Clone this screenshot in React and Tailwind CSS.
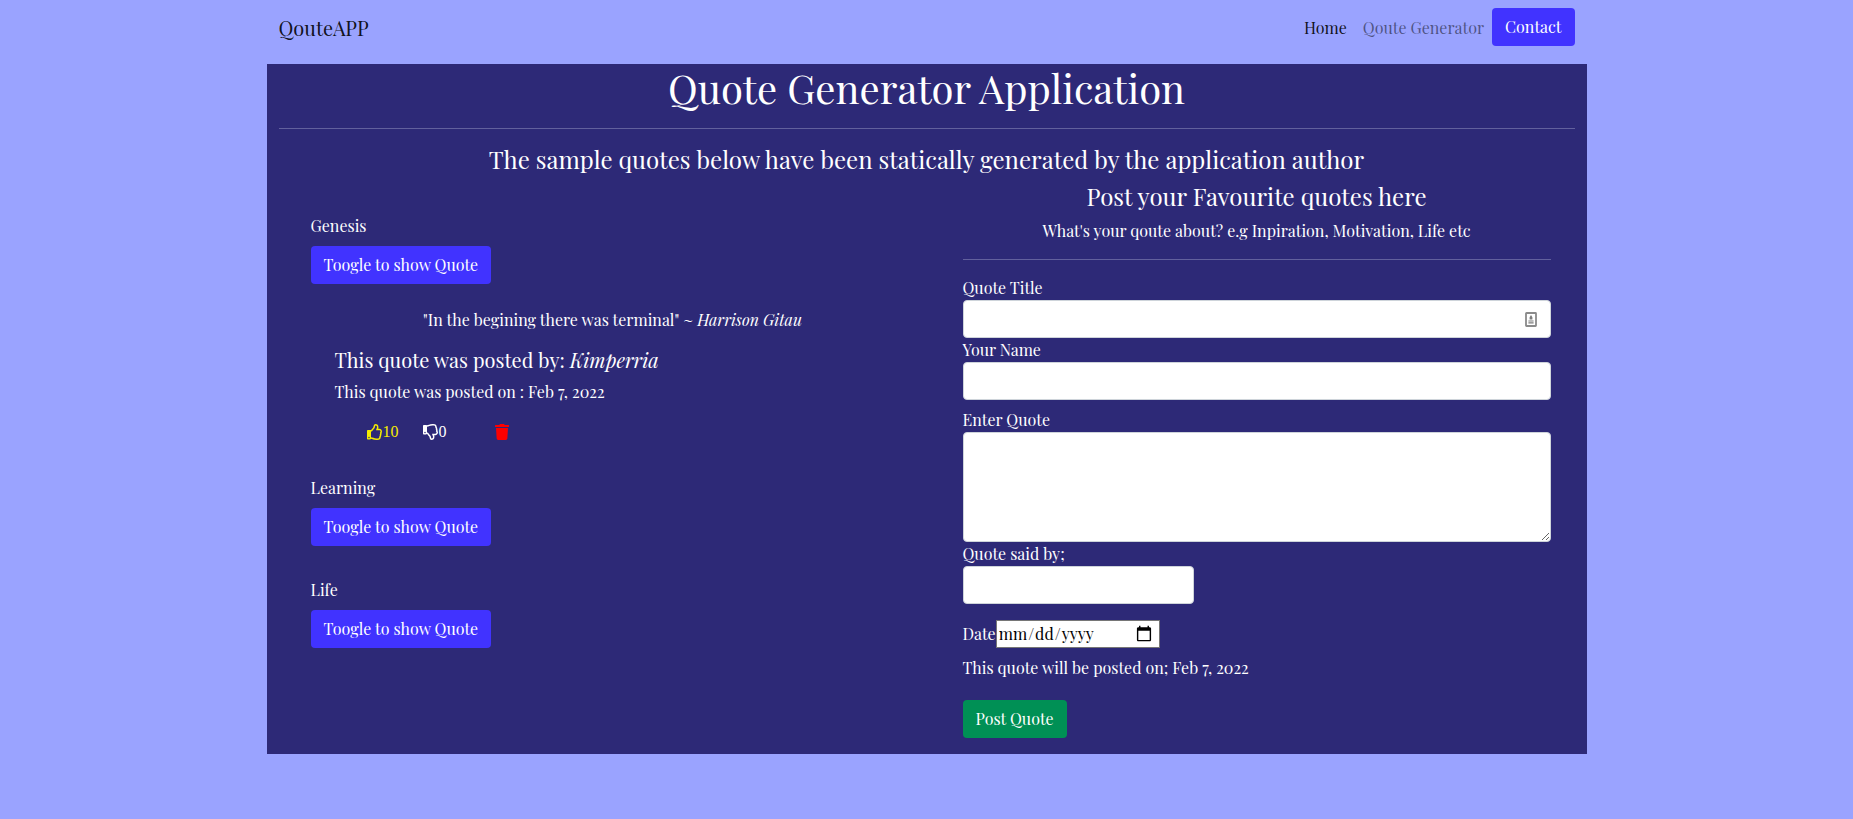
import { useState } from "react";
import { FaRegThumbsUp, FaRegThumbsDown, FaTrash } from "react-icons/fa";

const quotes = [
  {
    title: "Genesis",
    text: "In the begining there was terminal",
    author: "Harrison Gitau",
    poster: "Kimperria",
    date: "Feb 7, 2022",
    likes: 10,
    dislikes: 0,
  },
  { title: "Learning", text: "Never stop learning", author: "Unknown", poster: "Kimperria", date: "Feb 7, 2022", likes: 0, dislikes: 0 },
  { title: "Life", text: "Life is what you make it", author: "Unknown", poster: "Kimperria", date: "Feb 7, 2022", likes: 0, dislikes: 0 },
];

const fieldClass = "block h-[38px] rounded border border-[#ced4da] bg-white px-3 text-[#212529]";

function Quote({ quote, initiallyOpen }) {
  const [open, setOpen] = useState(initiallyOpen);
  return (
    <section>
      <h2 className="mb-2">{quote.title}</h2>
      <button
        type="button"
        onClick={() => setOpen(!open)}
        aria-expanded={open}
        className="h-[38px] rounded bg-[#4133ff] px-[13px] text-white"
      >
        Toogle to show Quote
      </button>
      {open && (
        <div className="px-6 pt-6">
          <p className="mb-4 text-center">
            "{quote.text}" ~ <em>{quote.author}</em>
          </p>
          <h3 className="mb-2 text-xl leading-6">
            This quote was posted by: <em>{quote.poster}</em>
          </h3>
          <p>This quote was posted on : {quote.date}</p>
          <div className="mt-4 flex h-6 items-center pl-8 font-['Liberation_Serif',serif]">
            <button type="button" aria-label="Like" className="flex items-center text-[#f5eb00]">
              <FaRegThumbsUp />
              {quote.likes}
            </button>
            <button type="button" aria-label="Dislike" className="ml-6 flex items-center">
              <FaRegThumbsDown />
              {quote.dislikes}
            </button>
            <button type="button" aria-label="Delete" className="ml-[47px] text-[#ff0000]">
              <FaTrash />
            </button>
          </div>
        </div>
      )}
    </section>
  );
}

export default function App() {
  return (
    <div className="min-h-screen bg-[#9aa3ff] font-['Playfair_Display','Liberation_Serif',serif] text-base leading-6 text-white">
      <div className="mx-auto max-w-[1320px]">
        <header className="flex items-start justify-between px-3 py-2 text-[#000000]/90">
          <a href="#top" className="mt-1 text-xl leading-8">
            QouteAPP
          </a>
          <nav className="flex items-start">
            <a href="#home" className="px-2 py-2">
              Home
            </a>
            <a href="#generator" className="px-2 py-2 text-[#000000]/50">
              Qoute Generator
            </a>
            <a href="#contact" className="h-[38px] rounded bg-[#4133ff] px-[13px] py-[7px] text-white">
              Contact
            </a>
          </nav>
        </header>

        <main className="mt-2 bg-[#2d2977] px-3 pb-4">
          <h1 className="text-center text-[40px] leading-[48px]">Quote Generator Application</h1>
          <hr className="my-4 border-[#62609d]" />
          <p className="mb-2 text-center text-2xl leading-7">
            The sample quotes below have been statically generated by the application author
          </p>

          <div className="grid grid-cols-2">
            <div className="flex flex-col gap-8 pt-[33px] pr-3 pl-8">
              {quotes.map((quote, index) => (
                <Quote key={quote.title} quote={quote} initiallyOpen={index === 0} />
              ))}
            </div>

            <form className="pr-6 pl-9" onSubmit={(event) => event.preventDefault()}>
              <h2 className="mb-2 text-center text-2xl leading-[30px]">Post your Favourite quotes here</h2>
              <p className="text-center">What's your qoute about? e.g Inpiration, Motivation, Life etc</p>
              <hr className="my-4 border-[#62609d]" />

              <label htmlFor="title" className="block">
                Quote Title
              </label>
              <div className="relative">
                <input id="title" type="text" className={`${fieldClass} w-full`} />
                <svg viewBox="0 0 12 15" className="absolute top-3 right-3.5 h-[15px] w-3" aria-hidden="true">
                  <rect x="1" y="1" width="10" height="13" rx="0.5" fill="#fff" stroke="#8a8a8a" strokeWidth="1.8" />
                  <path d="M6 3 7.4 5.2v2.3H4.6V5.2zM3.4 8.6h5.2v1H3.4zM3.4 10.3h5.2v1.3H3.4z" fill="#7c7c7c" />
                </svg>
              </div>
              <label htmlFor="name" className="block">
                Your Name
              </label>
              <input id="name" type="text" className={`${fieldClass} w-full`} />
              <label htmlFor="quote" className="mt-2 block">
                Enter Quote
              </label>
              <textarea
                id="quote"
                className="block h-[110px] w-full rounded border border-[#ced4da] bg-white px-3 py-1.5 text-[#212529]"
              />
              <label htmlFor="author" className="block">
                Quote said by;
              </label>
              <input id="author" type="text" className={`${fieldClass} w-[231px]`} />
              <div className="mt-4 flex items-center">
                <label htmlFor="date">Date</label>
                <input
                  id="date"
                  type="date"
                  className="h-7 w-[164px] border border-[#767676] bg-white pr-1 pl-px text-black [&::-webkit-calendar-picker-indicator]:h-[18px] [&::-webkit-calendar-picker-indicator]:w-[18px] [&::-webkit-datetime-edit-text]:p-0"
                />
              </div>
              <p className="mt-2">This quote will be posted on; Feb 7, 2022</p>
              <button type="submit" className="mt-5 h-[38px] rounded bg-[#009055] px-[13px] text-white">
                Post Quote
              </button>
            </form>
          </div>
        </main>
      </div>
    </div>
  );
}
